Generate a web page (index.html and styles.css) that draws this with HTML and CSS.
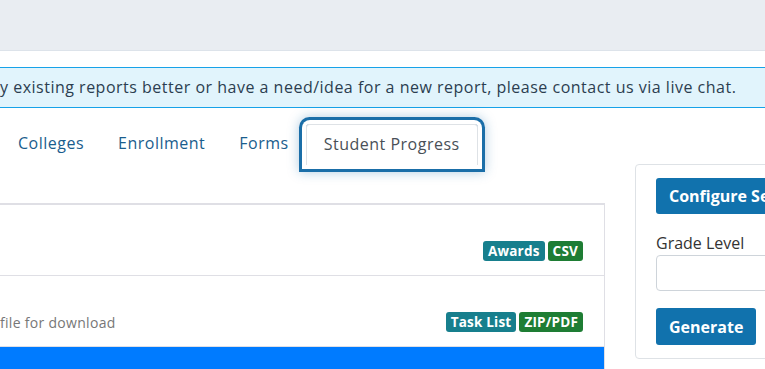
FILE: index.html
```html
<!DOCTYPE html>
<html lang="en">

<head>
    <meta charset="UTF-8">
    <title>Reports</title>
    <link rel="stylesheet" href="styles.css">
</head>

<body>

    <div class="topbar"></div>

    <div class="alert">y existing reports better or have a need/idea for a new report, please contact us via live chat.</div>

    <div class="layout">
        <div class="main-col">
            <ul class="tabs">
                <li><a class="tab-link">Colleges</a></li>
                <li><a class="tab-link">Enrollment</a></li>
                <li><a class="tab-link">Forms</a></li>
                <li><a class="tab-link active">Student Progress</a></li>
            </ul>

            <div class="report-list">
                <div class="report-item">
                    <div class="report-text"></div>
                    <div class="badges">
                        <span class="badge teal">Awards</span>
                        <span class="badge green">CSV</span>
                    </div>
                </div>
                <div class="report-item">
                    <div class="report-text">file for download</div>
                    <div class="badges">
                        <span class="badge teal">Task List</span>
                        <span class="badge green">ZIP/PDF</span>
                    </div>
                </div>
                <div class="report-item selected"></div>
            </div>
        </div>

        <div class="side-col">
            <div class="side-card">
                <button class="btn">Configure Settings</button>
                <label class="field-label">Grade Level</label>
                <input type="text" class="field-input">
                <button class="btn">Generate</button>
            </div>
        </div>
    </div>

</body>

</html>
```

FILE: styles.css
```css
body {
    margin: 0;
    font-family: "Open Sans", sans-serif;
    color: #333;
    background: #fff;
    overflow: hidden;
    width: 765px;
    height: 369px;
}

.topbar {
    height: 50px;
    background: #e9edf2;
    border-bottom: 1px solid #dde3ea;
}

.alert {
    margin-top: 16px;
    width: 900px;
    padding: 9px 0 10px;
    font-size: 16px;
    letter-spacing: 0.5px;
    line-height: 20px;
    color: #2c3e50;
    background: #e1f4fc;
    border-top: 1px solid #17a2e8;
    border-bottom: 1px solid #17a2e8;
    white-space: nowrap;
}

.layout {
    display: flex;
    gap: 30px;
}

.main-col {
    width: 605px;
    flex-shrink: 0;
}

.tabs {
    list-style: none;
    display: flex;
    margin: 0;
    padding: 16px 0 0 1px;
}

.tab-link {
    display: block;
    height: 41px;
    box-sizing: border-box;
    padding: 8px 17px 0;
    font-size: 16px;
    letter-spacing: 0.5px;
    line-height: 22px;
    color: #1a5d8d;
    cursor: pointer;
}

.tab-link.active {
    color: #495057;
    border: 1px solid #dee2e6;
    border-bottom: none;
    border-radius: 4px 4px 0 0;
    box-shadow: 0 0 0 4px #fff, 0 0 0 7px #1a6ea8, 0 0 12px 7px rgba(26, 110, 168, 0.35);
}

.report-list {
    margin-top: 38px;
    border-top: 2px solid #dfdfe5;
    border-right: 1px solid #dfdfe5;
}

.report-item {
    display: flex;
    align-items: flex-end;
    justify-content: space-between;
    height: 71px;
    padding: 0 21px 14px 0;
    box-sizing: border-box;
    border-bottom: 1px solid #dfdfe5;
}

.report-item.selected {
    background: #007bff;
    border-color: #007bff;
}

.report-text {
    font-size: 14px;
    letter-spacing: 0.3px;
    color: #777;
}

.badges {
    display: flex;
    gap: 3px;
}

.badge {
    padding: 0 5px;
    height: 20px;
    line-height: 20px;
    font-size: 13.5px;
    font-weight: 700;
    letter-spacing: 0.2px;
    color: #fff;
    border-radius: 3px;
}

.teal {
    background: #177f8d;
}

.green {
    background: #1e7d34;
}

.side-col {
    padding-top: 56px;
}

.side-card {
    width: 260px;
    height: 195px;
    box-sizing: border-box;
    padding: 13px 20px;
    border: 1px solid #dee2e6;
    border-radius: 4px;
    display: flex;
    flex-direction: column;
    align-items: flex-start;
}

.btn {
    height: 37px;
    padding: 0 13px;
    font-family: inherit;
    font-size: 16px;
    font-weight: 700;
    color: #fff;
    background: #1172ad;
    border: none;
    border-radius: 3px;
    white-space: nowrap;
}

.field-label {
    margin-top: 19px;
    font-size: 16px;
    line-height: 20px;
    color: #333;
}

.field-input {
    margin-top: 2px;
    width: 200px;
    height: 38px;
    box-sizing: border-box;
    border: 1px solid #ced4da;
    border-radius: 4px;
}

.field-input + .btn {
    margin-top: 17px;
    height: 38px;
}
```
